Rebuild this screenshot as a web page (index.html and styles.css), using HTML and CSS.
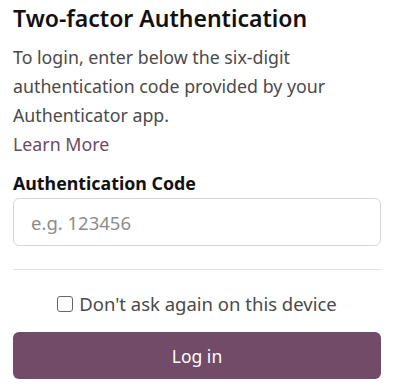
FILE: index.html
```html
<!DOCTYPE html>
<html>
<head>
<meta charset="utf-8">
<link rel="stylesheet" href="styles.css">
</head>
<body>
<form class="tfa">
  <h3 class="tfa-title">Two-factor Authentication</h3>
  <p class="tfa-text">To login, enter below the six-digit authentication code provided by your Authenticator app.<br><a class="tfa-link" href="#">Learn More</a></p>
  <label class="tfa-label" for="code">Authentication Code</label>
  <input class="tfa-input" id="code" type="text" placeholder="e.g. 123456">
  <hr class="tfa-sep">
  <label class="tfa-check"><span class="tfa-box"></span>Don't ask again on this device</label>
  <button class="tfa-btn" type="button">Log in</button>
</form>
</body>
</html>
```
FILE: styles.css
```css
html, body {
  margin: 0;
  padding: 0;
  background: #fff;
}
body {
  font-family: "Noto Sans", "Open Sans", sans-serif;
  color: #4a4a4a;
}
.tfa {
  display: flex;
  flex-direction: column;
  padding: 0 15px 0 13px;
}
.tfa-title {
  margin: 3px 0 0;
  font-size: 23px;
  font-weight: 600;
  line-height: 30px;
  color: #111;
}
.tfa-text {
  margin: 10px 0 0;
  font-size: 17.8px;
  line-height: 29px;
  color: #4a4a4a;
}
.tfa-link {
  color: #6d4a64;
  text-decoration: none;
}
.tfa-label {
  margin-top: 11px;
  font-size: 17.8px;
  font-weight: 700;
  line-height: 26px;
  color: #111;
}
.tfa-input {
  margin-top: 2px;
  height: 48px;
  box-sizing: border-box;
  border: 1px solid #d6d6d9;
  border-radius: 6px;
  padding: 0 17px;
  font: inherit;
  font-size: 18.5px;
  color: #333;
  outline: none;
}
.tfa-input::placeholder {
  color: #8c8c8c;
}
.tfa-sep {
  margin: 23px 0 0;
  border: 0;
  border-top: 1px solid #e2e2e2;
  height: 0;
}
.tfa-check {
  margin-top: 22px;
  display: flex;
  align-items: center;
  justify-content: center;
  gap: 6px;
  font-size: 18.5px;
  line-height: 24px;
  color: #4a4a4a;
}
.tfa-box {
  width: 14px;
  height: 14px;
  border: 1.5px solid #666;
  border-radius: 3px;
}
.tfa-btn {
  margin-top: 16px;
  height: 47px;
  border: 0;
  border-radius: 6px;
  background: #714b67;
  color: #fff;
  font: inherit;
  font-size: 17.5px;
}
```
